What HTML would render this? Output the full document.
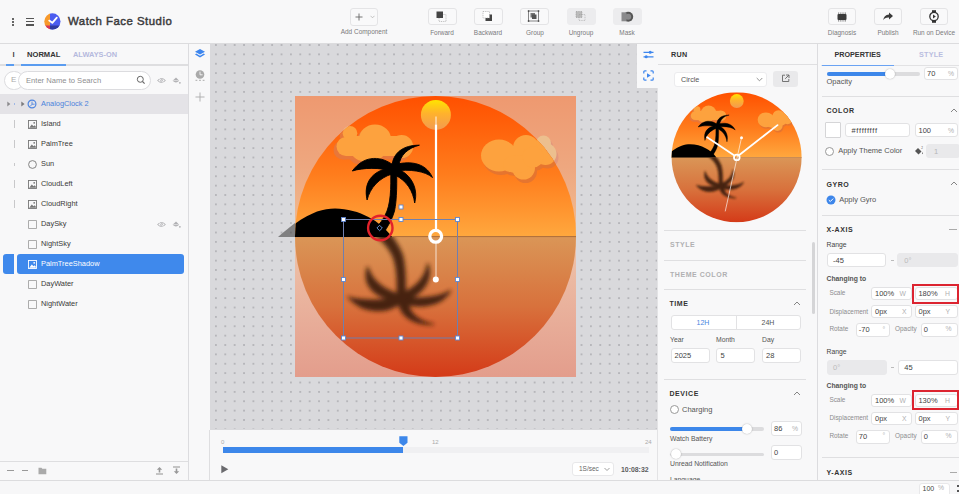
<!DOCTYPE html>
<html><head><meta charset="utf-8">
<style>
*{box-sizing:border-box;margin:0;padding:0}
html,body{width:959px;height:494px;overflow:hidden;background:#f7f7f8;font-family:"Liberation Sans",sans-serif;color:#333}
.a{position:absolute}
svg{display:block}
#hdr{left:0;top:0;width:959px;height:44px;background:#f8f8f9;border-bottom:1px solid #dcdcde}
#left{left:0;top:44px;width:189px;height:436px;background:#f8f8f9;border-right:1px solid #dcdcdf}
#strip{left:189px;top:44px;width:21px;height:436px;background:#f8f8f9}
#canvas{left:210px;top:44px;width:447px;height:385.6px;background-color:#d9d9dc;overflow:hidden}
#tl{left:209px;top:429.6px;width:448px;height:50.4px;background:#f8f8f9;border-left:1px solid #dedee0}
#prev{left:658px;top:44px;width:160px;height:436px;background:#f8f8f9;border-right:1px solid #dcdcdf}
#props{left:818px;top:44px;width:141px;height:436px;background:#f8f8f9}
#status{left:0;top:480px;width:959px;height:14px;background:#f7f7f8;border-top:1px solid #dcdcde}
.tb{border:1px solid #e4e4e6;border-radius:3px;background:#f9f9fa;width:29px;height:17px}
.tbd{background:#ececee;border-color:#ececee}
.tbl{font-size:6.45px;color:#7a7a7c;text-align:center;width:60px;white-space:nowrap}
.row{left:0;width:188px;height:20px}
.rt{left:41px;top:5.2px;font-size:7.4px;color:#383838;white-space:nowrap}
.ic{left:28px;top:6px;width:9px;height:9px}
.tick{left:14px;top:6px;width:1px;height:8px;background:#c8c8ca}

.in{position:absolute;background:#fff;border:1px solid #e2e2e4;border-radius:3px}
.dis{background:#e9e9eb;border-color:#e9e9eb}
.t{position:absolute;white-space:nowrap;line-height:1}
.sec{font-size:7px;font-weight:bold;letter-spacing:0.55px;color:#333}
.lbl{font-size:6.8px;color:#555}
.sm{font-size:6.4px;color:#8c8c8e}
.val{font-size:7.5px;color:#444}
.unit{font-size:6.8px;color:#b0b0b2}
.hl{position:absolute;height:1px;background:#dfdfe1}
</style></head><body>
<div id="hdr" class="a">
  <!-- kebab -->
  <div class="a" style="left:12px;top:17.8px;width:2px;height:1.8px;background:#666"></div>
  <div class="a" style="left:12px;top:21px;width:2px;height:1.8px;background:#666"></div>
  <div class="a" style="left:12px;top:24.2px;width:2px;height:1.8px;background:#666"></div>
  <!-- hamburger -->
  <div class="a" style="left:26px;top:17.6px;width:7.5px;height:1.25px;background:#555"></div>
  <div class="a" style="left:26px;top:21px;width:7.5px;height:1.25px;background:#555"></div>
  <div class="a" style="left:26px;top:24.4px;width:7.5px;height:1.25px;background:#555"></div>
  <!-- logo -->
  <svg class="a" style="left:44.3px;top:13px" width="17" height="17" viewBox="0 0 17 17">
    <defs><clipPath id="lc"><circle cx="8.4" cy="8.4" r="8.1"/></clipPath></defs>
    <g clip-path="url(#lc)">
      <rect x="0" y="0" width="6" height="17" fill="#f7992b"/>
      <rect x="0" y="12.5" width="6" height="5" fill="#d4365e"/>
      <rect x="6" y="0" width="11" height="17" fill="#4b5cf0"/>
      <rect x="6" y="12.5" width="11" height="5" fill="#2f3aa0"/>
    </g>
    <path d="M5.2 7.6 L8.3 9.8 L12.8 4.6" stroke="#fff" stroke-width="1.8" fill="none" stroke-linecap="round" stroke-linejoin="round"/>
  </svg>
  <div id="ttl" class="a" style="left:68px;top:15px;font-size:11.4px;font-weight:normal;-webkit-text-stroke:0.45px #3a3a3c;color:#3a3a3c;letter-spacing:0.5px;white-space:nowrap">Watch Face Studio</div>

  <!-- Add component -->
  <div class="a tb" style="left:350px;top:8px;width:28px;height:18px"></div>
  <svg class="a" style="left:354.5px;top:12.5px" width="8" height="8" viewBox="0 0 8 8"><path d="M4 0.5 V7.5 M0.5 4 H7.5" stroke="#666" stroke-width="0.9"/></svg>
  <svg class="a" style="left:370px;top:15px" width="5" height="4" viewBox="0 0 5 4"><path d="M0.5 0.8 L2.5 2.8 L4.5 0.8" stroke="#aaa" stroke-width="0.7" fill="none"/></svg>
  <div class="a tbl" style="left:334px;top:28px">Add Component</div>

  <div class="a tb" style="left:428px;top:8px"></div>
  <svg class="a" style="left:434px;top:10px" width="16" height="14" viewBox="0 0 16 14">
    <rect x="5" y="4.5" width="7" height="7" fill="none" stroke="#999" stroke-width="0.6" stroke-dasharray="1 0.8"/>
    <rect x="2.5" y="1.5" width="6.5" height="6.5" fill="#444"/>
  </svg>
  <div class="a tbl" style="left:412px;top:28.8px">Forward</div>

  <div class="a tb" style="left:474px;top:8px"></div>
  <svg class="a" style="left:480px;top:10px" width="16" height="14" viewBox="0 0 16 14">
    <rect x="5.5" y="4.5" width="6.5" height="6.5" fill="#444"/>
    <rect x="3" y="1.5" width="6.5" height="6.5" fill="#fff" stroke="#999" stroke-width="0.6" stroke-dasharray="1 0.8"/>
  </svg>
  <div class="a tbl" style="left:458px;top:28.8px">Backward</div>

  <div class="a tb" style="left:520px;top:8px"></div>
  <svg class="a" style="left:526px;top:9px" width="16" height="15" viewBox="0 0 16 15">
    <rect x="2.5" y="2" width="10" height="10" fill="none" stroke="#555" stroke-width="0.7"/>
    <rect x="4.5" y="4" width="4.5" height="4.5" fill="#777"/>
    <rect x="6" y="5.5" width="4.5" height="4.5" fill="#555"/>
    <rect x="1.8" y="1.3" width="1.5" height="1.5" fill="#444"/><rect x="11.8" y="1.3" width="1.5" height="1.5" fill="#444"/>
    <rect x="1.8" y="11.3" width="1.5" height="1.5" fill="#444"/><rect x="11.8" y="11.3" width="1.5" height="1.5" fill="#444"/>
  </svg>
  <div class="a tbl" style="left:505px;top:28.8px">Group</div>

  <div class="a tb tbd" style="left:567px;top:8px"></div>
  <svg class="a" style="left:573px;top:9px" width="16" height="15" viewBox="0 0 16 15">
    <rect x="3" y="2.5" width="6" height="6" fill="#bbb" stroke="#888" stroke-width="0.5" stroke-dasharray="1 0.7"/>
    <rect x="6" y="5.5" width="6" height="6" fill="none" stroke="#999" stroke-width="0.5" stroke-dasharray="1 0.7"/>
  </svg>
  <div class="a tbl" style="left:551px;top:28.8px">Ungroup</div>

  <div class="a tb tbd" style="left:613px;top:8px"></div>
  <svg class="a" style="left:619px;top:9px" width="16" height="15" viewBox="0 0 16 15">
    <circle cx="9.2" cy="7.8" r="5" fill="#555"/>
    <rect x="2.5" y="3.3" width="5" height="9" fill="#8a8a8c"/>
    <circle cx="9.2" cy="7.8" r="3" fill="#8a8a8c"/>
  </svg>
  <div class="a tbl" style="left:597px;top:28.8px">Mask</div>

  <div class="a tb" style="left:828px;top:8px;width:28px"></div>
  <svg class="a" style="left:835px;top:11px" width="14" height="12" viewBox="0 0 14 12">
    <rect x="2.5" y="3" width="9" height="6" rx="1" fill="#3a3a3a"/>
    <path d="M3.5 1.5v1.3M5.3 1.5v1.3M7.1 1.5v1.3M8.9 1.5v1.3M10.5 1.5v1.3M3.5 9.2v1.3M5.3 9.2v1.3M7.1 9.2v1.3M8.9 9.2v1.3M10.5 9.2v1.3" stroke="#555" stroke-width="0.7"/>
  </svg>
  <div class="a tbl" style="left:812px;top:28.8px">Diagnosis</div>

  <div class="a tb" style="left:874px;top:8px;width:28px"></div>
  <svg class="a" style="left:881px;top:10px" width="14" height="13" viewBox="0 0 14 13">
    <path d="M8 2.5 L12 6 L8 9.5 V7.5 C5 7.3 3.5 8.3 2.2 10.2 C2.6 6.8 4.5 4.8 8 4.5 Z" fill="#3a3a3a"/>
  </svg>
  <div class="a tbl" style="left:858px;top:28.8px">Publish</div>

  <div class="a tb" style="left:920px;top:8px;width:28px"></div>
  <svg class="a" style="left:927px;top:9px" width="14" height="15" viewBox="0 0 14 15">
    <rect x="5" y="1.2" width="4" height="2.5" fill="#333"/>
    <rect x="5" y="11.3" width="4" height="2.5" fill="#333"/>
    <circle cx="7" cy="7.5" r="4.2" fill="none" stroke="#333" stroke-width="1.3"/>
    <path d="M6 5.6 L8.8 7.5 L6 9.4Z" fill="#333"/>
  </svg>
  <div class="a tbl" style="left:904px;top:28.8px">Run on Device</div>
</div>

<div id="left" class="a">
  <div class="a" style="left:12.5px;top:6px;font-size:7.6px;font-weight:bold;color:#444">I</div>
  <div class="a" style="left:27px;top:6px;font-size:7.6px;font-weight:bold;color:#333;letter-spacing:0px">NORMAL</div>
  <div class="a" style="left:73px;top:6px;font-size:7.4px;font-weight:bold;color:#b5b9dd;letter-spacing:0px">ALWAYS-ON</div>
  <div class="a" style="left:0;top:20px;width:188px;height:1.5px;background:#dedee0"></div>
  <div class="a" style="left:6px;top:20px;width:8px;height:1.5px;background:#5a9cf0"></div>
  <div class="a" style="left:21px;top:20px;width:45px;height:1.5px;background:#5a9cf0"></div>
  <!-- search -->
  <div class="a" style="left:4px;top:27px;width:20px;height:19px;border:1px solid #dcdcdf;border-radius:10px;background:#fff"></div>
  <div class="a" style="left:11px;top:31px;font-size:8px;color:#aaa">E</div>
  <div class="a" style="left:18px;top:27px;width:133px;height:19px;border:1px solid #dcdcdf;border-radius:10px;background:#fff"></div>
  <div class="a" style="left:26px;top:32px;font-size:7.6px;color:#8e8e90;white-space:nowrap">Enter Name to Search</div>
  <svg class="a" style="left:136px;top:31px" width="10" height="10" viewBox="0 0 10 10"><circle cx="4.3" cy="4.3" r="3" fill="none" stroke="#666" stroke-width="1"/><path d="M6.5 6.5 L8.6 8.6" stroke="#666" stroke-width="1.1"/></svg>
  <svg class="a" style="left:156.5px;top:32.5px" width="9" height="7" viewBox="0 0 9 7"><path d="M0.6 3.5 Q4.5 -0.3 8.4 3.5 Q4.5 7.3 0.6 3.5Z" fill="none" stroke="#b0b0b3" stroke-width="1"/><circle cx="4.5" cy="3.5" r="1.2" fill="#b0b0b3"/><path d="M1.8 0.8 L7 6.4" stroke="#f8f8f9" stroke-width="0.7"/></svg>
  <svg class="a" style="left:171.5px;top:32.5px" width="9" height="8" viewBox="0 0 9 8"><path d="M4 0.6 L0.6 3.8 Q4 7.3 7.2 3.8 Z" fill="#b0b0b3"/><path d="M1.2 3.6 H6.6" stroke="#f8f8f9" stroke-width="0.6"/><circle cx="7.9" cy="5.8" r="0.9" fill="#b0b0b3"/></svg>
  <!-- rows -->
  <div class="a row" style="top:50px;background:#e4e3e7">
    <svg class="a" style="left:6.8px;top:7.2px" width="5" height="6" viewBox="0 0 5 6"><path d="M0.3 0.5 L3.3 3 L0.3 5.5Z" fill="#8a8a8c"/></svg>
    <div class="a" style="left:14px;top:9px;width:0.8px;height:2px;background:#9fb8e6"></div>
    <svg class="a" style="left:21.2px;top:7.2px" width="5" height="6" viewBox="0 0 5 6"><path d="M0.3 0.5 L3.6 3 L0.3 5.5Z" fill="#7c7c7e"/></svg>
    <svg class="a" style="left:27.3px;top:4.9px" width="10" height="10" viewBox="0 0 10 10"><circle cx="5" cy="5" r="3.9" fill="none" stroke="#4f86e0" stroke-width="1.2"/><path d="M5 2.6 V5.2 H7.6 M5 5.2 L3.4 7.2" stroke="#4f86e0" stroke-width="0.9" fill="none"/></svg>
    <div class="a rt" style="color:#4a82dc">AnalogClock 2</div>
  </div>
<div class="a row" style="top:70px"><div class="a tick"></div><svg class="a ic" viewBox="0 0 9 9"><rect x="0.5" y="0.5" width="8" height="8" fill="none" stroke="#777" stroke-width="0.9"/><path d="M1.2 7.8 L3.8 4.6 L5.5 6.3 L6.6 5.2 L7.8 6.6 V7.8Z" fill="#777"/><circle cx="6.2" cy="2.8" r="0.9" fill="#777"/></svg><div class="a rt">Island</div></div>
<div class="a row" style="top:90px"><div class="a tick"></div><svg class="a ic" viewBox="0 0 9 9"><rect x="0.5" y="0.5" width="8" height="8" fill="none" stroke="#777" stroke-width="0.9"/><path d="M1.2 7.8 L3.8 4.6 L5.5 6.3 L6.6 5.2 L7.8 6.6 V7.8Z" fill="#777"/><circle cx="6.2" cy="2.8" r="0.9" fill="#777"/></svg><div class="a rt">PalmTree</div></div>
<div class="a row" style="top:110px"><div class="a tick" style="height:3px;top:9px"></div><svg class="a ic" viewBox="0 0 9 9"><circle cx="4.5" cy="4.5" r="3.9" fill="none" stroke="#777" stroke-width="0.9"/></svg><div class="a rt">Sun</div></div>
<div class="a row" style="top:130px"><div class="a tick"></div><svg class="a ic" viewBox="0 0 9 9"><rect x="0.5" y="0.5" width="8" height="8" fill="none" stroke="#777" stroke-width="0.9"/><path d="M1.2 7.8 L3.8 4.6 L5.5 6.3 L6.6 5.2 L7.8 6.6 V7.8Z" fill="#777"/><circle cx="6.2" cy="2.8" r="0.9" fill="#777"/></svg><div class="a rt">CloudLeft</div></div>
<div class="a row" style="top:150px"><div class="a tick"></div><svg class="a ic" viewBox="0 0 9 9"><rect x="0.5" y="0.5" width="8" height="8" fill="none" stroke="#777" stroke-width="0.9"/><path d="M1.2 7.8 L3.8 4.6 L5.5 6.3 L6.6 5.2 L7.8 6.6 V7.8Z" fill="#777"/><circle cx="6.2" cy="2.8" r="0.9" fill="#777"/></svg><div class="a rt">CloudRight</div></div>
<div class="a row" style="top:170px"><svg class="a ic" viewBox="0 0 9 9"><rect x="0.6" y="0.6" width="7.8" height="7.8" fill="none" stroke="#999" stroke-width="0.8"/></svg><div class="a rt">DaySky</div><svg class="a" style="left:156.5px;top:6.5px" width="9" height="7" viewBox="0 0 9 7"><path d="M0.6 3.5 Q4.5 -0.3 8.4 3.5 Q4.5 7.3 0.6 3.5Z" fill="none" stroke="#b0b0b3" stroke-width="1"/><circle cx="4.5" cy="3.5" r="1.2" fill="#b0b0b3"/><path d="M1.8 0.8 L7 6.4" stroke="#f8f8f9" stroke-width="0.7"/></svg><svg class="a" style="left:171.5px;top:6.5px" width="9" height="8" viewBox="0 0 9 8"><path d="M4 0.6 L0.6 3.8 Q4 7.3 7.2 3.8 Z" fill="#b0b0b3"/><path d="M1.2 3.6 H6.6" stroke="#f8f8f9" stroke-width="0.6"/><circle cx="7.9" cy="5.8" r="0.9" fill="#b0b0b3"/></svg></div>
<div class="a row" style="top:190px"><svg class="a ic" viewBox="0 0 9 9"><rect x="0.6" y="0.6" width="7.8" height="7.8" fill="none" stroke="#999" stroke-width="0.8"/></svg><div class="a rt">NightSky</div></div>
<div class="a" style="left:3px;top:210px;width:11px;height:20px;background:#3f89ec;border-radius:3px 0 0 3px"></div>
<div class="a" style="left:17px;top:210px;width:167px;height:20px;background:#3f89ec;border-radius:3px"></div>
<div class="a row" style="top:210px"><svg class="a ic" viewBox="0 0 9 9"><rect x="0.5" y="0.5" width="8" height="8" fill="none" stroke="#fff" stroke-width="0.9"/><path d="M1.2 7.8 L3.8 4.6 L5.5 6.3 L6.6 5.2 L7.8 6.6 V7.8Z" fill="#fff"/><circle cx="6.2" cy="2.8" r="0.9" fill="#fff"/></svg><div class="a rt" style="color:#fff">PalmTreeShadow</div></div>
<div class="a row" style="top:230px"><svg class="a ic" viewBox="0 0 9 9"><rect x="0.6" y="0.6" width="7.8" height="7.8" fill="none" stroke="#999" stroke-width="0.8"/></svg><div class="a rt">DayWater</div></div>
<div class="a row" style="top:250px"><svg class="a ic" viewBox="0 0 9 9"><rect x="0.6" y="0.6" width="7.8" height="7.8" fill="none" stroke="#999" stroke-width="0.8"/></svg><div class="a rt">NightWater</div></div>
  <!-- bottom bar -->
  <div class="a" style="left:0;top:417px;width:188px;height:1px;background:#dedee0"></div>
  <div class="a" style="left:7px;top:426px;width:6.5px;height:1.2px;background:#999"></div>
  <div class="a" style="left:21.5px;top:426px;width:6.5px;height:1.2px;background:#999"></div>
  <svg class="a" style="left:38px;top:423px" width="9" height="8" viewBox="0 0 9 8"><path d="M0.5 0.8 H3.5 L4.3 1.8 H8.3 V7.3 H0.5Z" fill="#aaa"/></svg>
  <svg class="a" style="left:155px;top:422px" width="9" height="9" viewBox="0 0 9 9"><path d="M1 8 H8" stroke="#999" stroke-width="1.1"/><path d="M4.5 1 L1.8 3.8 H3.7 V6.5 H5.3 V3.8 H7.2Z" fill="#999"/></svg>
  <svg class="a" style="left:172px;top:422px" width="9" height="9" viewBox="0 0 9 9"><path d="M1 1 H8" stroke="#999" stroke-width="1.1"/><path d="M4.5 8 L1.8 5.2 H3.7 V2.5 H5.3 V5.2 H7.2Z" fill="#999"/></svg>
</div>
<div id="strip" class="a">
  <svg class="a" style="left:4.5px;top:4px" width="12" height="12" viewBox="0 0 12 12"><path d="M6 1 L11 3.8 L6 6.6 L1 3.8Z" fill="#3d86ee"/><path d="M2.2 5.6 L6 7.8 L9.8 5.6 L11 6.4 L6 9.4 L1 6.4Z" fill="#3d86ee"/></svg>
  <svg class="a" style="left:4.5px;top:25px" width="12" height="14" viewBox="0 0 12 14"><circle cx="6" cy="5.5" r="4.3" fill="#aaa"/><path d="M6 2.6 V5.8 H8.6" stroke="#f8f8f9" stroke-width="0.9" fill="none"/><path d="M1.5 11.3 H3.3 M5.1 11.3 H6.9 M8.7 11.3 H10.5" stroke="#aaa" stroke-width="1"/></svg>
  <svg class="a" style="left:5.5px;top:47.5px" width="10" height="10" viewBox="0 0 10 10"><path d="M5 0.5 V9.5 M0.5 5 H9.5" stroke="#aaa" stroke-width="0.9"/></svg>
</div>
<div id="canvas" class="a">
<svg class="a" style="left:0;top:0" width="447" height="385" viewBox="210 44 447 385">
  <defs>
    <pattern id="dots" x="215.9" y="45" width="9.375" height="9.375" patternUnits="userSpaceOnUse">
      <rect x="-0.7" y="-0.7" width="1.4" height="1.4" fill="#9a9a9e"/>
      <rect x="8.675" y="-0.7" width="1.4" height="1.4" fill="#9a9a9e"/>
      <rect x="-0.7" y="8.675" width="1.4" height="1.4" fill="#9a9a9e"/>
      <rect x="8.675" y="8.675" width="1.4" height="1.4" fill="#9a9a9e"/>
    </pattern>
    <linearGradient id="sky" x1="0" y1="0" x2="0" y2="1">
      <stop offset="0" stop-color="#ff5000"/>
      <stop offset="0.55" stop-color="#ff7c1c"/>
      <stop offset="1" stop-color="#ffa83e"/>
    </linearGradient>
    <linearGradient id="water" x1="0" y1="0" x2="0" y2="1">
      <stop offset="0" stop-color="#da9657"/>
      <stop offset="0.5" stop-color="#d8713c"/>
      <stop offset="1" stop-color="#d43a18"/>
    </linearGradient>
    <linearGradient id="sun" x1="0" y1="0" x2="0" y2="1">
      <stop offset="0" stop-color="#ffe400"/>
      <stop offset="0.45" stop-color="#ffb22c"/>
      <stop offset="1" stop-color="#f29a52"/>
    </linearGradient>
    <linearGradient id="osky" x1="0" y1="0" x2="0" y2="1">
      <stop offset="0" stop-color="#ee9970"/><stop offset="0.5" stop-color="#eea77f"/><stop offset="1" stop-color="#f1bd93"/>
    </linearGradient>
    <linearGradient id="owater" x1="0" y1="0" x2="0" y2="1">
      <stop offset="0" stop-color="#efc5aa"/><stop offset="0.5" stop-color="#e9b19c"/><stop offset="1" stop-color="#e39d8c"/>
    </linearGradient>
    <clipPath id="circ"><circle cx="140.5" cy="140.5" r="140.5"/></clipPath>
    <clipPath id="sq"><rect x="0" y="0" width="281" height="281"/></clipPath>
    <clipPath id="waterclip"><rect x="-50" y="141" width="400" height="200"/></clipPath>
    <filter id="blur" x="-30%" y="-30%" width="160%" height="160%"><feGaussianBlur stdDeviation="2.2"/></filter>
    <g id="palm">
      <path d="M97 70 C98 57 108 49 124.4 49.2 C113 52 105 59 103.8 70 Z"/>
      <path d="M98 69 C88 61 70 57.5 57.3 75 C68 71.5 85 71.5 98 75 Z"/>
      <path d="M99 69 C112 65 130 65 137.5 81.5 C130 75 115 73 99 75 Z"/>
      <path d="M94 72 C78 75 68 86 72.1 104 C75 92 84 82 97 78 Z"/>
      <path d="M101 72 C114 77 124 90 119.7 107 C118 95 112 85 100 79 Z"/>
      <path d="M95.5 68 C96 85 96.5 103 92 115 C89 123 84 129 78 135 L88 138 C93 130 97 124 99.5 115 C102 104 102 85 101.5 68 Z"/>
    </g>
    <g id="cl1"><circle cx="55" cy="37.2" r="7.3"/><ellipse cx="80" cy="43" rx="16" ry="14.5"/><circle cx="106.7" cy="50.6" r="11.5"/><circle cx="51" cy="50.5" r="9.5"/><ellipse cx="73" cy="55" rx="17" ry="10.8"/><rect x="51" y="40" width="56" height="20"/></g>
    <g id="cl2"><ellipse cx="204" cy="59.5" rx="18" ry="16"/><circle cx="231" cy="52" r="13"/><circle cx="248.5" cy="47" r="7.5"/><circle cx="250.5" cy="58" r="11"/><circle cx="228.5" cy="72" r="11.5"/><circle cx="215" cy="67" r="9"/><rect x="204" y="50" width="36" height="20"/><ellipse cx="222" cy="68" rx="14" ry="9"/><circle cx="238" cy="61" r="10.5"/></g>
    <g id="clouds">
      <use href="#cl1" fill="#e8773a" transform="translate(-3,3.5)"/>
      <use href="#cl1" fill="#fda23e"/>
      <use href="#cl2" fill="#e6752f" transform="translate(2,3.5)"/>
      <use href="#cl2" fill="#fda23e"/>
    </g>
    <g id="scene">
      <rect x="-20" y="0" width="321" height="141" fill="url(#sky)"/>
      <rect x="-20" y="140.5" width="321" height="141" fill="url(#water)"/>
      <rect x="-20" y="140" width="321" height="1.1" fill="#a86a3a" opacity="0.85"/>
      <circle cx="140.9" cy="18.9" r="15" fill="url(#sun)"/>
      <use href="#clouds"/>
      <path d="M-17 141 C10 118 25 112.5 40 112.5 C65 113 85 125 97 141 Z" fill="#000"/>
      <use href="#palm" fill="#000" stroke="#000" stroke-width="0.9" stroke-linejoin="round"/>
      <g clip-path="url(#waterclip)"><g filter="url(#blur)" opacity="0.92">
        <use href="#palm" fill="#3a1e0c" stroke="#3a1e0c" stroke-width="1.3" transform="translate(106,205.2) scale(1.27,-1.05) translate(-98.5,-71.3)"/>
      </g></g>
    </g>
  </defs>
  <rect x="210" y="44" width="447" height="385" fill="url(#dots)"/>
  <g transform="translate(295,96)">
    <rect x="0" y="0" width="281" height="141" fill="url(#osky)"/>
    <rect x="0" y="141" width="281" height="140" fill="url(#owater)"/>
    <g clip-path="url(#sq)">
      <use href="#cl1" fill="#e2977c" transform="translate(-3,3.5)"/><use href="#cl1" fill="#ecbf8e"/>
      <use href="#cl2" fill="#e2977c" transform="translate(2,3.5)"/><use href="#cl2" fill="#ecbf8e"/>
    </g>
    <path d="M-17 141 C-10 135 -5 131 0 127 L0 141 Z" fill="#444" opacity="0.6"/>
    <g clip-path="url(#circ)"><use href="#scene"/></g>
  </g>
  <!-- hands -->
  <rect x="435" y="116.5" width="2" height="8" fill="#fff" opacity="0.45"/>
  <rect x="434.9" y="124.5" width="2.2" height="107" fill="#fff"/>
  <rect x="435.5" y="242" width="1" height="38" fill="#fff" opacity="0.75"/>
  <circle cx="435.8" cy="279.6" r="3" fill="#fff"/>
  <circle cx="435.7" cy="236.3" r="5.9" fill="none" stroke="#fff" stroke-width="3.3"/>
  <!-- selection -->
  <rect x="343.5" y="219.5" width="114" height="118.5" fill="none" stroke="#6f7fae" stroke-width="1"/>
  <g fill="#fff" stroke="#5f86d0" stroke-width="0.9">
    <rect x="341.5" y="217.5" width="4" height="4"/><rect x="399" y="217.5" width="4" height="4"/><rect x="455.5" y="217.5" width="4" height="4"/>
    <rect x="399" y="205" width="4" height="4"/>
    <rect x="341.5" y="277.5" width="4" height="4"/><rect x="455.5" y="277.5" width="4" height="4"/>
    <rect x="341.5" y="336" width="4" height="4"/><rect x="399" y="336" width="4" height="4"/><rect x="455.5" y="336" width="4" height="4"/>
  </g>
  <circle cx="380.3" cy="228" r="12.2" fill="none" stroke="#e3222b" stroke-width="2.4"/>
  <path d="M379.6 225.3 L382.3 228 L379.6 230.7 L376.9 228 Z" fill="none" stroke="#6d9be0" stroke-width="0.9"/>
</svg>
</div>

<div id="tl" class="a">
  <div class="t" style="left:11px;top:9px;font-size:6px;color:#aaa">0</div>
  <div class="t" style="left:222px;top:9px;font-size:6px;color:#aaa">12</div>
  <div class="t" style="left:435px;top:9px;font-size:6px;color:#aaa">24</div>
  <div class="a" style="left:12.5px;top:17.5px;width:426.5px;height:6.3px;background:#f0f0f2"></div>
  <div class="a" style="left:12.5px;top:17.5px;width:180.5px;height:6.3px;background:#3d87ea"></div>
  <svg class="a" style="left:188.5px;top:6px" width="9" height="11" viewBox="0 0 9 11"><path d="M0.3 0.3 H8.5 V6.8 L4.4 10 L0.3 6.8 Z" fill="#3d87ea"/></svg>
  <svg class="a" style="left:11px;top:35px" width="8" height="9" viewBox="0 0 8 9"><path d="M0.3 0.3 L7.3 4.3 L0.3 8.3 Z" fill="#6a6a6e"/></svg>
  <div class="in" style="left:362px;top:32px;width:42px;height:14.5px;border-color:#e8e8ea"></div>
  <div class="t" style="left:369px;top:36px;font-size:6.5px;color:#666">1S/sec</div>
  <svg class="a" style="left:394px;top:37px" width="6" height="5" viewBox="0 0 6 5"><path d="M0.5 1 L3 3.5 L5.5 1" stroke="#888" stroke-width="0.8" fill="none"/></svg>
  <div class="t" style="left:411px;top:37.3px;font-size:6.9px;font-weight:bold;color:#5c5c5e">10:08:32</div>
</div>
<div id="prev" class="a">
  <div class="a" style="left:-21px;top:0;width:21px;height:44px;background:#f8f8f9"></div>
  <svg class="a" style="left:-15.5px;top:5.5px" width="11" height="9" viewBox="0 0 11 9"><path d="M0.5 2.3 H10.5 M0.5 6.8 H10.5" stroke="#3d86ee" stroke-width="1.2"/><circle cx="7.2" cy="2.3" r="1.5" fill="#3d86ee"/><circle cx="3.2" cy="6.8" r="1.5" fill="#3d86ee"/></svg>
  <svg class="a" style="left:-15.5px;top:26px" width="11" height="11" viewBox="0 0 11 11"><path d="M0.8 3.5 V1.8 Q0.8 0.8 1.8 0.8 H3.5 M7.5 0.8 H9.2 Q10.2 0.8 10.2 1.8 V3.5 M10.2 7.5 V9.2 Q10.2 10.2 9.2 10.2 H7.5 M3.5 10.2 H1.8 Q0.8 10.2 0.8 9.2 V7.5" stroke="#3d86ee" stroke-width="1.2" fill="none"/><path d="M4 3.2 L7.8 5.5 L4 7.8Z" fill="#3d86ee"/></svg>
  <div class="t" style="left:13px;top:6.5px;font-size:7.2px;font-weight:bold;color:#333;letter-spacing:0.3px">RUN</div>
  <div class="hl" style="left:0;top:20px;width:159px"></div>
  <div class="in" style="left:16px;top:27.5px;width:93px;height:15px;border-color:#ececee"></div>
  <div class="t" style="left:23px;top:31.5px;font-size:7.2px;color:#555">Circle</div>
  <svg class="a" style="left:98px;top:33px" width="7" height="5" viewBox="0 0 7 5"><path d="M0.7 1 L3.5 3.8 L6.3 1" stroke="#777" stroke-width="0.8" fill="none"/></svg>
  <div class="a" style="left:115px;top:27px;width:25px;height:15.5px;background:#e9e9eb;border-radius:3px"></div>
  <svg class="a" style="left:123px;top:30px" width="9" height="9" viewBox="0 0 9 9"><path d="M4 1.2 H1.5 V7.5 H7.8 V5" stroke="#666" stroke-width="0.9" fill="none"/><path d="M5 1 H8 V4 M8 1 L4.2 4.8" stroke="#666" stroke-width="0.9" fill="none"/></svg>
  <svg class="a" style="left:0;top:0" width="160" height="200" viewBox="658 44 160 200">
    <g transform="translate(671.6,92.3) scale(0.46263)">
      <g clip-path="url(#circ)"><use href="#scene"/></g>
    </g>
    <g stroke="#fff" stroke-linecap="round" fill="none">
      <path d="M733.6 155 L707.1 137.2" stroke-width="1.8"/>
      <path d="M739.6 154.8 L777.5 125.1" stroke-width="1.8"/>
      <path d="M741.5 137.8 L725.3 211" stroke-width="0.8" opacity="0.8"/>
      <circle cx="736.8" cy="157.4" r="2.8" stroke-width="1.8"/>
    </g>
    <circle cx="741.5" cy="137.8" r="1.5" fill="#fff"/>
  </svg>
  <div class="hl" style="left:6px;top:185.5px;width:142px"></div>
  <div class="a" style="left:153.5px;top:198px;width:3.5px;height:72px;background:#d5d5d7;border-radius:2px"></div>
  <div class="t sec" style="left:12px;top:197px;color:#b0b0b2">STYLE</div>
  <div class="hl" style="left:6px;top:216px;width:142px"></div>
  <div class="t sec" style="left:12px;top:227px;color:#b0b0b2">THEME COLOR</div>
  <div class="hl" style="left:6px;top:245px;width:142px"></div>
  <div class="t sec" style="left:11.5px;top:256px">TIME</div>
  <svg class="a" style="left:135px;top:257px" width="8" height="5" viewBox="0 0 8 5"><path d="M1 4 L4 1 L7 4" stroke="#777" stroke-width="0.9" fill="none"/></svg>
  <div class="in" style="left:12.5px;top:270.5px;width:130.5px;height:15px"></div>
  <div class="a" style="left:77.5px;top:271px;width:1px;height:14px;background:#e2e2e4"></div>
  <div class="t" style="left:38.5px;top:274.5px;font-size:7px;color:#4a86e0">12H</div>
  <div class="t" style="left:103.5px;top:274.5px;font-size:7px;color:#555">24H</div>
  <div class="t lbl" style="left:12px;top:293px">Year</div>
  <div class="t lbl" style="left:58px;top:293px">Month</div>
  <div class="t lbl" style="left:104px;top:293px">Day</div>
  <div class="in" style="left:12.5px;top:303.5px;width:39px;height:15px"></div>
  <div class="in" style="left:58.3px;top:303.5px;width:39px;height:15px"></div>
  <div class="in" style="left:104px;top:303.5px;width:39px;height:15px"></div>
  <div class="t val" style="left:16.5px;top:307.5px">2025</div>
  <div class="t val" style="left:62.5px;top:307.5px">5</div>
  <div class="t val" style="left:108px;top:307.5px">28</div>
  <div class="hl" style="left:6px;top:335px;width:142px"></div>
  <div class="t sec" style="left:11.5px;top:346px">DEVICE</div>
  <svg class="a" style="left:135px;top:347px" width="8" height="5" viewBox="0 0 8 5"><path d="M1 4 L4 1 L7 4" stroke="#777" stroke-width="0.9" fill="none"/></svg>
  <div class="a" style="left:11.5px;top:361px;width:9px;height:9px;border:1px solid #999;border-radius:50%;background:#fff"></div>
  <div class="t lbl" style="left:24px;top:361.5px;font-size:7.5px">Charging</div>
  <div class="a" style="left:12px;top:383px;width:94px;height:3.5px;background:#dcdcde;border-radius:2px"></div>
  <div class="a" style="left:12px;top:383px;width:77px;height:3.5px;background:#3d87ea;border-radius:2px"></div>
  <div class="a" style="left:83.5px;top:379.5px;width:10px;height:10px;border-radius:50%;background:#fff;box-shadow:0 0 1.5px rgba(0,0,0,0.35)"></div>
  <div class="in" style="left:112.5px;top:376.5px;width:31px;height:15px"></div>
  <div class="t val" style="left:116px;top:380.5px">86</div>
  <div class="t unit" style="left:134px;top:381.8px">%</div>
  <div class="t lbl" style="left:12px;top:392.3px">Watch Battery</div>
  <div class="a" style="left:12px;top:408.5px;width:94px;height:3.5px;background:#dcdcde;border-radius:2px"></div>
  <div class="a" style="left:12.5px;top:405px;width:10px;height:10px;border-radius:50%;background:#fff;box-shadow:0 0 1.5px rgba(0,0,0,0.35)"></div>
  <div class="in" style="left:112.5px;top:401px;width:31px;height:15px"></div>
  <div class="t val" style="left:116px;top:405px">0</div>
  <div class="t lbl" style="left:12px;top:417px">Unread Notification</div>
  <div class="t lbl" style="left:12px;top:432.5px">Language</div>
</div>
<div id="props" class="a">
  <div class="t" style="left:16.5px;top:6.5px;font-size:7.2px;font-weight:bold;color:#333;letter-spacing:0px">PROPERTIES</div>
  <div class="t" style="left:101px;top:6.5px;font-size:7.2px;font-weight:bold;color:#b9bde0;letter-spacing:0.25px">STYLE</div>
  <div class="hl" style="left:3px;top:21px;width:138px;background:#e2e2e4"></div>
  <div class="a" style="left:3.5px;top:20.5px;width:72.5px;height:1.5px;background:#6aa3f3"></div>
  <div class="a" style="left:8.5px;top:27.8px;width:93px;height:3.8px;background:#dcdcde;border-radius:2px"></div>
  <div class="a" style="left:8.5px;top:27.8px;width:64px;height:3.8px;background:#3d87ea;border-radius:2px"></div>
  <div class="a" style="left:66.5px;top:24.5px;width:10.5px;height:10.5px;border-radius:50%;background:#fff;box-shadow:0 0 1.5px rgba(0,0,0,0.35)"></div>
  <div class="in" style="left:105.5px;top:22.5px;width:34.5px;height:13.5px"></div>
  <div class="t val" style="left:109px;top:26px">70</div>
  <div class="t unit" style="left:130px;top:27px">%</div>
  <div class="t lbl" style="left:8.5px;top:34px;font-size:7.5px">Opacity</div>
  <div class="hl" style="left:3.5px;top:52px;width:138px"></div>
  <div class="t sec" style="left:8.5px;top:63px">COLOR</div>
  <svg class="a" style="left:131.5px;top:63.5px" width="8" height="5" viewBox="0 0 8 5"><path d="M1 4 L4 1 L7 4" stroke="#777" stroke-width="0.9" fill="none"/></svg>
  <div class="in" style="left:6.8px;top:77.8px;width:16.5px;height:16.5px;border-color:#d5d5d7;border-radius:1px"></div>
  <div class="in" style="left:26.7px;top:79px;width:65.5px;height:14px"></div>
  <div class="t val" style="left:33.5px;top:82.5px;letter-spacing:0.7px">#ffffffff</div>
  <div class="in" style="left:96.8px;top:79px;width:43.5px;height:14px"></div>
  <div class="t val" style="left:100.5px;top:82.5px">100</div>
  <div class="t unit" style="left:130px;top:83.5px">%</div>
  <div class="a" style="left:7.2px;top:102.5px;width:9px;height:9px;border:1px solid #999;border-radius:50%;background:#fff"></div>
  <div class="t lbl" style="left:20.2px;top:103px;font-size:7.5px">Apply Theme Color</div>
  <svg class="a" style="left:96px;top:102px" width="10" height="10" viewBox="0 0 10 10"><path d="M1 5 L4 2 L7.5 5.5 L4.5 8.5Z" fill="#555"/><path d="M8.5 6 Q9.5 7.5 8.5 8.3 Q7.5 7.5 8.5 6Z" fill="#555"/><text x="7.2" y="3" font-size="3" fill="#555" font-family="Liberation Sans">2</text></svg>
  <div class="in dis" style="left:108.2px;top:100.4px;width:34px;height:14px"></div>
  <div class="t val" style="left:116px;top:104px;color:#b5b5b7">1</div>
  <div class="hl" style="left:3.5px;top:125px;width:138px"></div>
  <div class="t sec" style="left:8.5px;top:136.5px">GYRO</div>
  <svg class="a" style="left:131.5px;top:137px" width="8" height="5" viewBox="0 0 8 5"><path d="M1 4 L4 1 L7 4" stroke="#777" stroke-width="0.9" fill="none"/></svg>
  <svg class="a" style="left:8px;top:151px" width="10" height="10" viewBox="0 0 10 10"><circle cx="5" cy="5" r="4.5" fill="#3d86ea"/><path d="M2.8 5.1 L4.3 6.5 L7.2 3.6" stroke="#fff" stroke-width="1" fill="none"/></svg>
  <div class="t lbl" style="left:21.2px;top:151.5px;font-size:7.5px">Apply Gyro</div>
  <div class="hl" style="left:3.5px;top:170.5px;width:138px"></div>
  <div class="t sec" style="left:8.5px;top:181.5px">X-AXIS</div>
  <div class="a" style="left:131.3px;top:184.5px;width:7.7px;height:1px;background:#aaa"></div>
  <div class="t lbl" style="left:8.5px;top:197.5px;color:#444">Range</div>
  <div class="in" style="left:8.5px;top:208.9px;width:59.6px;height:14.1px"></div>
  <div class="t val" style="left:15px;top:212.5px">-45</div>
  <div class="a" style="left:72.5px;top:216px;width:3px;height:0.8px;background:#bbb"></div>
  <div class="in dis" style="left:79px;top:208.9px;width:60.8px;height:14.1px"></div>
  <div class="t val" style="left:86.3px;top:212.5px;color:#bbb">0°</div>
  <div class="t lbl" style="left:8.5px;top:232.2px;font-weight:bold;color:#555">Changing to</div>
  
  <div class="t sm" style="left:11.4px;top:246.3px">Scale</div>
  <div class="in" style="left:52.8px;top:242.8px;width:40.8px;height:13.5px"></div>
  <div class="t val" style="left:57px;top:246.1px">100%</div>
  <div class="t unit" style="left:81.4px;top:246.9px">W</div>
  <div class="in" style="left:96.8px;top:242.8px;width:43.2px;height:13.5px"></div>
  <div class="t val" style="left:100.4px;top:246.1px">180%</div>
  <div class="t unit" style="left:127px;top:246.9px">H</div>
  <div class="a" style="left:94.3px;top:240.1px;width:46.5px;height:19.5px;border:2px solid #dc2430"></div>
  <div class="t sm" style="left:11.4px;top:264.5px">Displacement</div>
  <div class="in" style="left:52.8px;top:261.2px;width:40.8px;height:13.3px"></div>
  <div class="t val" style="left:57px;top:264.3px">0px</div>
  <div class="t unit" style="left:83.9px;top:265.1px">X</div>
  <div class="in" style="left:96.8px;top:261.2px;width:43.2px;height:13.3px"></div>
  <div class="t val" style="left:100.5px;top:264.3px">0px</div>
  <div class="t unit" style="left:127.6px;top:265.1px">Y</div>
  <div class="t sm" style="left:11.4px;top:282.3px">Rotate</div>
  <div class="in" style="left:37.7px;top:279.0px;width:34.5px;height:13.9px"></div>
  <div class="t val" style="left:40.8px;top:282.1px">-70</div>
  <div class="t unit" style="left:64.4px;top:282.6px">°</div>
  <div class="t sm" style="left:77.1px;top:282.3px">Opacity</div>
  <div class="in" style="left:102.6px;top:279.0px;width:37.4px;height:13.9px"></div>
  <div class="t val" style="left:105.8px;top:282.1px">0</div>
  <div class="t unit" style="left:127.6px;top:282.3px">%</div>
  <div class="t lbl" style="left:8.5px;top:304.5px;color:#444">Range</div>
  <div class="in dis" style="left:8.5px;top:315.5px;width:60.1px;height:15px"></div>
  <div class="t val" style="left:15px;top:319.5px;color:#bbb">0°</div>
  <div class="a" style="left:72.5px;top:323px;width:3px;height:0.8px;background:#bbb"></div>
  <div class="in" style="left:79.7px;top:315.5px;width:60.3px;height:15px"></div>
  <div class="t val" style="left:86.3px;top:319.5px">45</div>
  <div class="t lbl" style="left:8.5px;top:339px;font-weight:bold;color:#555">Changing to</div>
  
  <div class="t sm" style="left:11.4px;top:353.0px">Scale</div>
  <div class="in" style="left:52.8px;top:349.5px;width:40.8px;height:13.5px"></div>
  <div class="t val" style="left:57px;top:352.8px">100%</div>
  <div class="t unit" style="left:81.4px;top:353.6px">W</div>
  <div class="in" style="left:96.8px;top:349.5px;width:43.2px;height:13.5px"></div>
  <div class="t val" style="left:100.4px;top:352.8px">130%</div>
  <div class="t unit" style="left:127px;top:353.6px">H</div>
  <div class="a" style="left:94.3px;top:346.0px;width:46.5px;height:20.0px;border:2px solid #dc2430"></div>
  <div class="t sm" style="left:11.4px;top:371.2px">Displacement</div>
  <div class="in" style="left:52.8px;top:367.9px;width:40.8px;height:13.3px"></div>
  <div class="t val" style="left:57px;top:371.0px">0px</div>
  <div class="t unit" style="left:83.9px;top:371.8px">X</div>
  <div class="in" style="left:96.8px;top:367.9px;width:43.2px;height:13.3px"></div>
  <div class="t val" style="left:100.5px;top:371.0px">0px</div>
  <div class="t unit" style="left:127.6px;top:371.8px">Y</div>
  <div class="t sm" style="left:11.4px;top:389.0px">Rotate</div>
  <div class="in" style="left:37.7px;top:385.7px;width:34.5px;height:13.9px"></div>
  <div class="t val" style="left:40.8px;top:388.8px">70</div>
  <div class="t unit" style="left:64.4px;top:389.3px">°</div>
  <div class="t sm" style="left:77.1px;top:389.0px">Opacity</div>
  <div class="in" style="left:102.6px;top:385.7px;width:37.4px;height:13.9px"></div>
  <div class="t val" style="left:105.8px;top:388.8px">0</div>
  <div class="t unit" style="left:127.6px;top:389.0px">%</div>
  <div class="hl" style="left:3.5px;top:413px;width:138px"></div>
  <div class="t sec" style="left:8.5px;top:424.5px">Y-AXIS</div>
  <div class="a" style="left:131.5px;top:427.5px;width:7.7px;height:1px;background:#aaa"></div>
</div>
<div class="a" style="left:657px;top:88px;width:1px;height:392px;background:#e3e3e5"></div>
<div id="status" class="a">
  <div class="in" style="left:919px;top:1.5px;width:30.5px;height:14px;border-color:#e8e8ea"></div>
  <div class="t val" style="left:922.5px;top:3.5px;font-size:7px">100</div>
  <div class="t unit" style="left:938px;top:4px">%</div>
  <div class="a" style="left:956.5px;top:4px;width:2px;height:2px;background:#555"></div>
  <div class="a" style="left:956.5px;top:9px;width:2px;height:2px;background:#555"></div>
</div>
</body></html>
